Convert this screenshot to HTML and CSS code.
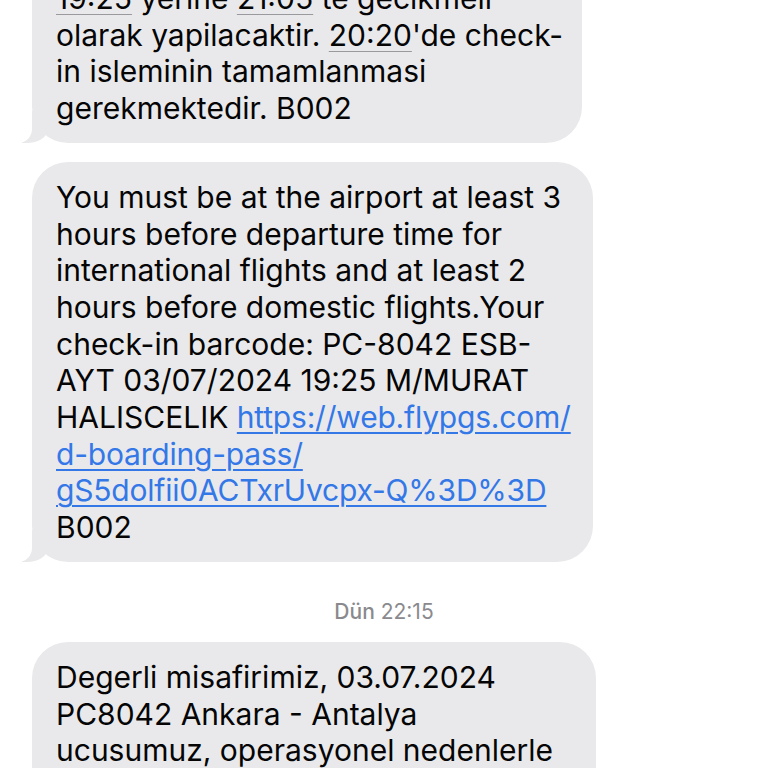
FILE: index.html
```html
<!doctype html>
<html lang="tr">
<head>
    <meta charset="utf-8" name="viewport" content="width=device-width,initial-scale=1">
    <title>Mesajlar</title>
    <link rel="stylesheet" href="styles.css">
</head>
<body>
    <div class="thread">
        <div class="bubble tail first">
            <span class="date">19:25</span> yerine <span class="date">21:05</span> te gecikmeli<br>
            olarak yapilacaktir. <span class="date">20:20</span>'de check-<br>
            in isleminin tamamlanmasi<br>
            gerekmektedir. B002
        </div>
        <div class="bubble tail second">
            You must be at the airport at least 3<br>
            hours before departure time for<br>
            international flights and at least 2<br>
            hours before domestic flights.Your<br>
            check-in barcode: PC-8042 ESB-<br>
            AYT 03/07/2024 19:25 M/MURAT<br>
            HALISCELIK <a class="link" href="#">https://web.flypgs.com/<br>d-boarding-pass/<br>gS5dolfii0ACTxrUvcpx-Q%3D%3D</a><br>
            B002
        </div>
        <div class="stamp"><b>Dün</b> 22:15</div>
        <div class="bubble third">
            Degerli misafirimiz, 03.07.2024<br>
            PC8042 Ankara - Antalya<br>
            ucusumuz, operasyonel nedenlerle<br>
            19:25 yerine 21:05 te gecikmeli
        </div>
    </div>
</body>
</html>
```

FILE: styles.css
```css
body{
    margin: 0;
    background-color: #ffffff;
    overflow: hidden;
    font-family: Inter, "Noto Sans", sans-serif;
}
.thread{
    display: flex;
    flex-direction: column;
    align-items: flex-start;
    margin-top: -37px;
    padding-left: 32px;
}
.bubble{
    position: relative;
    box-sizing: border-box;
    padding: 17px 20px 16px 24px;
    border-radius: 36px;
    background-color: #e9e9eb;
    color: #050505;
    font-size: 30px;
    line-height: 36.7px;
    white-space: nowrap;
}
.bubble.first{
    width: 550px;
}
.bubble.second{
    width: 561px;
    margin-top: 19px;
}
.bubble.third{
    width: 564px;
}
/* little tail at the bottom left */
.bubble.tail::before{
    content: "";
    position: absolute;
    bottom: 0;
    left: -10px;
    width: 28px;
    height: 32px;
    background-color: #e9e9eb;
    border-bottom-right-radius: 22px 19px;
}
.bubble.tail::after{
    content: "";
    position: absolute;
    bottom: 0;
    left: -36px;
    width: 36px;
    height: 34px;
    background-color: #ffffff;
    border-bottom-right-radius: 14px;
}
.date{
    text-decoration: underline;
    text-decoration-color: #9a9a9e;
    text-decoration-thickness: 1px;
    text-underline-offset: 5px;
}
.link{
    color: #3478e8;
    text-decoration: underline;
    text-decoration-thickness: 2px;
    text-underline-offset: 4px;
    letter-spacing: -0.2px;
}
.stamp{
    align-self: stretch;
    margin: 37px 0 17px -32px;
    text-align: center;
    font-size: 21px;
    line-height: 26px;
    color: #8a8a8e;
}
.stamp b{
    font-weight: 500;
}
```
